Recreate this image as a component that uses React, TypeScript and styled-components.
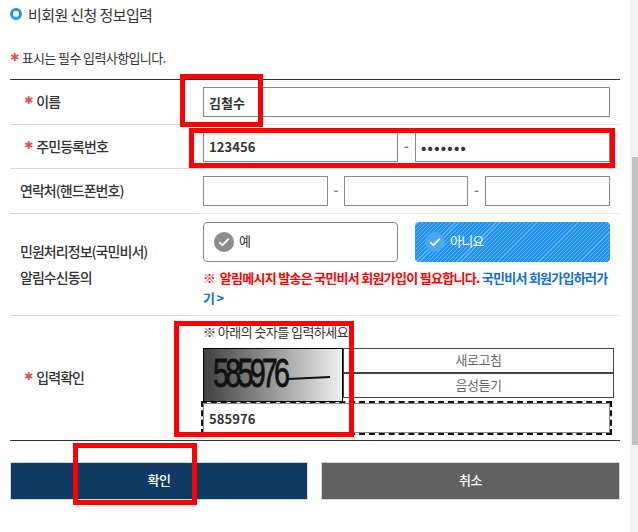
import React from "react";
import styled, { createGlobalStyle } from "styled-components";

const GlobalStyle = createGlobalStyle`
  html, body {
    margin: 0;
    padding: 0;
    background: #fff;
    overflow: hidden;
  }
  * {
    box-sizing: border-box;
  }
  body {
    font-family: "Noto Sans CJK KR", "Noto Sans", sans-serif;
    color: #333;
  }
`;

const Page = styled.div`
  position: relative;
  display: flex;
  width: 638px;
  height: 532px;
  overflow: hidden;
`;

const Main = styled.div`
  width: 630px;
  padding: 0 10px;
`;

const TitleRow = styled.h2`
  display: flex;
  align-items: center;
  gap: 6px;
  height: 30px;
  margin: 0;
  padding-bottom: 2px;
  font-size: 15px;
  font-weight: 400;
  letter-spacing: -0.6px;
  color: #333;
`;

const TitleDot = styled.span`
  width: 12px;
  height: 12px;
  border: 3px solid #2196f3;
  border-radius: 50%;
`;

const Note = styled.p`
  display: flex;
  align-items: center;
  gap: 3px;
  height: 20px;
  margin: 18px 0 11px;
  padding-bottom: 2px;
  font-size: 13px;
  letter-spacing: -0.6px;
  color: #333;
`;

const Star = styled.span`
  font-family: "DejaVu Sans", sans-serif;
  font-size: 11px;
  color: #ee4f56;
`;

const Table = styled.div`
  border-top: 1px solid #333;
  border-bottom: 1px solid #333;
`;

const Row = styled.div<{ $h: number; $last?: boolean }>`
  display: grid;
  grid-template-columns: 183px 1fr;
  height: ${(p) => p.$h}px;
  border-bottom: ${(p) => (p.$last ? "none" : "1px solid #e6e6e6")};
`;

const Label = styled.div<{ $required?: boolean; $last?: boolean }>`
  display: flex;
  align-items: center;
  gap: 4px;
  margin-bottom: ${(p) => (p.$last ? "0" : "-1px")};
  padding-left: ${(p) => (p.$required ? "14px" : "10px")};
  padding-bottom: 2px;
  border-bottom: ${(p) => (p.$last ? "none" : "1px solid #d6d6d6")};
  font-size: 14px;
  font-weight: 500;
  line-height: 26px;
  letter-spacing: -0.95px;
  color: #333;
`;

const Cell = styled.div`
  display: flex;
  align-items: center;
  padding-left: 10px;
`;

const InputBox = styled.input<{ $w: number }>`
  width: ${(p) => p.$w}px;
  height: 30px;
  padding: 0 5px;
  border: 1px solid #888;
  border-radius: 0;
  outline: none;
  background: #fff;
  font-family: inherit;
  font-size: 13px;
  font-weight: 700;
  letter-spacing: 0.1px;
  color: #333;
  &[type="password"] {
    font-size: 14px;
    letter-spacing: 1.3px;
  }
`;

const Dash = styled.span<{ $w: number }>`
  width: ${(p) => p.$w}px;
  padding-bottom: 3px;
  text-align: center;
  font-size: 13px;
  font-weight: 700;
  color: #777;
`;

const ConsentCell = styled.div`
  padding: 8px 0 0 10px;
`;

const RadioRow = styled.div`
  display: flex;
  gap: 17px;
`;

const Radio = styled.div<{ $on?: boolean }>`
  display: flex;
  align-items: center;
  gap: 5px;
  width: 195px;
  height: 40px;
  padding-left: 10px;
  border: ${(p) => (p.$on ? "none" : "1px solid #888")};
  border-radius: 4px;
  font-size: 13px;
  letter-spacing: -0.8px;
  color: ${(p) => (p.$on ? "#fff" : "#333")};
  background: ${(p) =>
    p.$on
      ? "repeating-linear-gradient(135deg, #2193ee 0, #2193ee 2.1px, #64b5f5 2.1px, #64b5f5 2.9px)"
      : "#fff"};
`;

const RadioText = styled.span`
  padding-bottom: 3px;
`;

const CheckDot = styled.span<{ $on?: boolean }>`
  display: flex;
  align-items: center;
  justify-content: center;
  width: 20px;
  height: 20px;
  border-radius: 50%;
  background: ${(p) => (p.$on ? "#49a8f6" : "#8c8c8c")};
`;

const Notice = styled.p`
  margin: 6px 0 0;
  width: 410px;
  font-size: 13px;
  font-weight: 700;
  line-height: 20px;
  letter-spacing: -0.72px;
  color: #f00;
`;

const NoticeLink = styled.span`
  color: #0f6fd8;
`;

const CaptchaCell = styled.div`
  padding: 6px 0 0 10px;
`;

const CaptchaHint = styled.div`
  height: 20px;
  font-size: 13px;
  line-height: 20px;
  letter-spacing: -0.55px;
  color: #333;
`;

const CaptchaRow = styled.div`
  display: flex;
  margin-top: 6px;
`;

const CaptchaImage = styled.div`
  position: relative;
  width: 140px;
  height: 54px;
  border: 1px solid #000;
  background: linear-gradient(90deg, #404040, #f0f0f0);
  overflow: hidden;
`;

const CaptchaDigits = styled.span`
  display: block;
  padding: 4px 0 0 13px;
  font-family: "Liberation Sans", sans-serif;
  font-size: 41px;
  line-height: 40px;
  letter-spacing: -5.4px;
  color: #111;
  -webkit-text-stroke: 0.8px #111;
  transform: scaleX(0.7);
  transform-origin: left;
`;

const CaptchaStroke = styled.svg`
  position: absolute;
  left: 0;
  top: 0;
`;

const CaptchaButtons = styled.div`
  display: flex;
  flex-direction: column;
  width: 271px;
`;

const SideButton = styled.button`
  height: 25px;
  padding: 0 0 2px;
  border: 1px solid #444;
  background: #fff;
  font-family: inherit;
  font-size: 13px;
  letter-spacing: -0.5px;
  color: #666;
`;

const CaptchaInput = styled.input`
  display: block;
  width: 407px;
  height: 30px;
  margin-top: 1px;
  padding: 0 5px;
  border: 1px solid #888;
  outline: 2px dashed #111;
  outline-offset: 0;
  background: #fff;
  font-family: inherit;
  font-size: 13px;
  font-weight: 700;
  letter-spacing: 0.1px;
  color: #333;
`;

const Actions = styled.div`
  display: flex;
  gap: 13px;
  margin-top: 21px;
`;

const ActionButton = styled.button<{ $color: string; $w: number }>`
  width: ${(p) => p.$w}px;
  height: 38px;
  padding: 0 0 3px;
  border: 1px solid #d5d5d5;
  background: ${(p) => p.$color};
  font-family: inherit;
  font-size: 13px;
  font-weight: 500;
  letter-spacing: -0.5px;
  color: #fff;
`;

const ScrollTrack = styled.div`
  width: 8px;
  padding: 157px 0 0 2px;
  background: #f1f1f1;
`;

const ScrollThumb = styled.div`
  height: 288px;
  background: #c1c1c1;
`;

const Mark = styled.div<{ $x: number; $y: number; $w: number; $h: number }>`
  position: absolute;
  left: ${(p) => p.$x}px;
  top: ${(p) => p.$y}px;
  width: ${(p) => p.$w}px;
  height: ${(p) => p.$h}px;
  border: 5px solid #f00;
  pointer-events: none;
`;

const Check = () => (
  <svg width="12" height="10" viewBox="0 0 12 10" fill="none">
    <path d="M1.2 5.2 4.4 8.2 10.8 1.6" stroke="#fff" strokeWidth="1.8" />
  </svg>
);

const App = () => {
  return (
    <Page>
      <GlobalStyle />
      <Main>
        <TitleRow>
          <TitleDot />
          비회원 신청 정보입력
        </TitleRow>
        <Note>
          <Star>✱</Star> 표시는 필수 입력사항입니다.
        </Note>
        <Table>
          <Row $h={45}>
            <Label $required>
              <Star>✱</Star> 이름
            </Label>
            <Cell>
              <InputBox $w={407} defaultValue="김철수" />
            </Cell>
          </Row>
          <Row $h={44}>
            <Label $required>
              <Star>✱</Star> 주민등록번호
            </Label>
            <Cell>
              <InputBox $w={195} defaultValue="123456" />
              <Dash $w={17}>-</Dash>
              <InputBox $w={195} type="password" defaultValue="1234567" />
            </Cell>
          </Row>
          <Row $h={45}>
            <Label>연락처(핸드폰번호)</Label>
            <Cell>
              <InputBox $w={125} />
              <Dash $w={16}>-</Dash>
              <InputBox $w={124} />
              <Dash $w={17}>-</Dash>
              <InputBox $w={125} />
            </Cell>
          </Row>
          <Row $h={102}>
            <Label>
              민원처리정보(국민비서)
              <br />
              알림수신동의
            </Label>
            <ConsentCell>
              <RadioRow>
                <Radio>
                  <CheckDot>
                    <Check />
                  </CheckDot>
                  <RadioText>예</RadioText>
                </Radio>
                <Radio $on>
                  <CheckDot $on>
                    <Check />
                  </CheckDot>
                  <RadioText>아니요</RadioText>
                </Radio>
              </RadioRow>
              <Notice>
                ※ &nbsp;알림메시지 발송은 국민비서 회원가입이 필요합니다.{" "}
                <NoticeLink>국민비서 회원가입하러가기 &gt;</NoticeLink>
              </Notice>
            </ConsentCell>
          </Row>
          <Row $h={124} $last>
            <Label $required $last>
              <Star>✱</Star> 입력확인
            </Label>
            <CaptchaCell>
              <CaptchaHint>※ 아래의 숫자를 입력하세요.</CaptchaHint>
              <CaptchaRow>
                <CaptchaImage>
                  <CaptchaDigits>585976</CaptchaDigits>
                  <CaptchaStroke width="140" height="54" viewBox="0 0 140 54">
                    <path d="M84 30 126 28" stroke="#111" strokeWidth="2" fill="none" />
                  </CaptchaStroke>
                </CaptchaImage>
                <CaptchaButtons>
                  <SideButton>새로고침</SideButton>
                  <SideButton>음성듣기</SideButton>
                </CaptchaButtons>
              </CaptchaRow>
              <CaptchaInput defaultValue="585976" />
            </CaptchaCell>
          </Row>
        </Table>
        <Actions>
          <ActionButton $color="#0f3a63" $w={298}>
            확인
          </ActionButton>
          <ActionButton $color="#616161" $w={299}>
            취소
          </ActionButton>
        </Actions>
      </Main>
      <ScrollTrack>
        <ScrollThumb />
      </ScrollTrack>
      <Mark $x={180} $y={74} $w={83} $h={53} />
      <Mark $x={189} $y={128} $w={426} $h={40} />
      <Mark $x={174} $y={321} $w={180} $h={116} />
      <Mark $x={73} $y={443} $w={124} $h={62} />
    </Page>
  );
};

export default App;
